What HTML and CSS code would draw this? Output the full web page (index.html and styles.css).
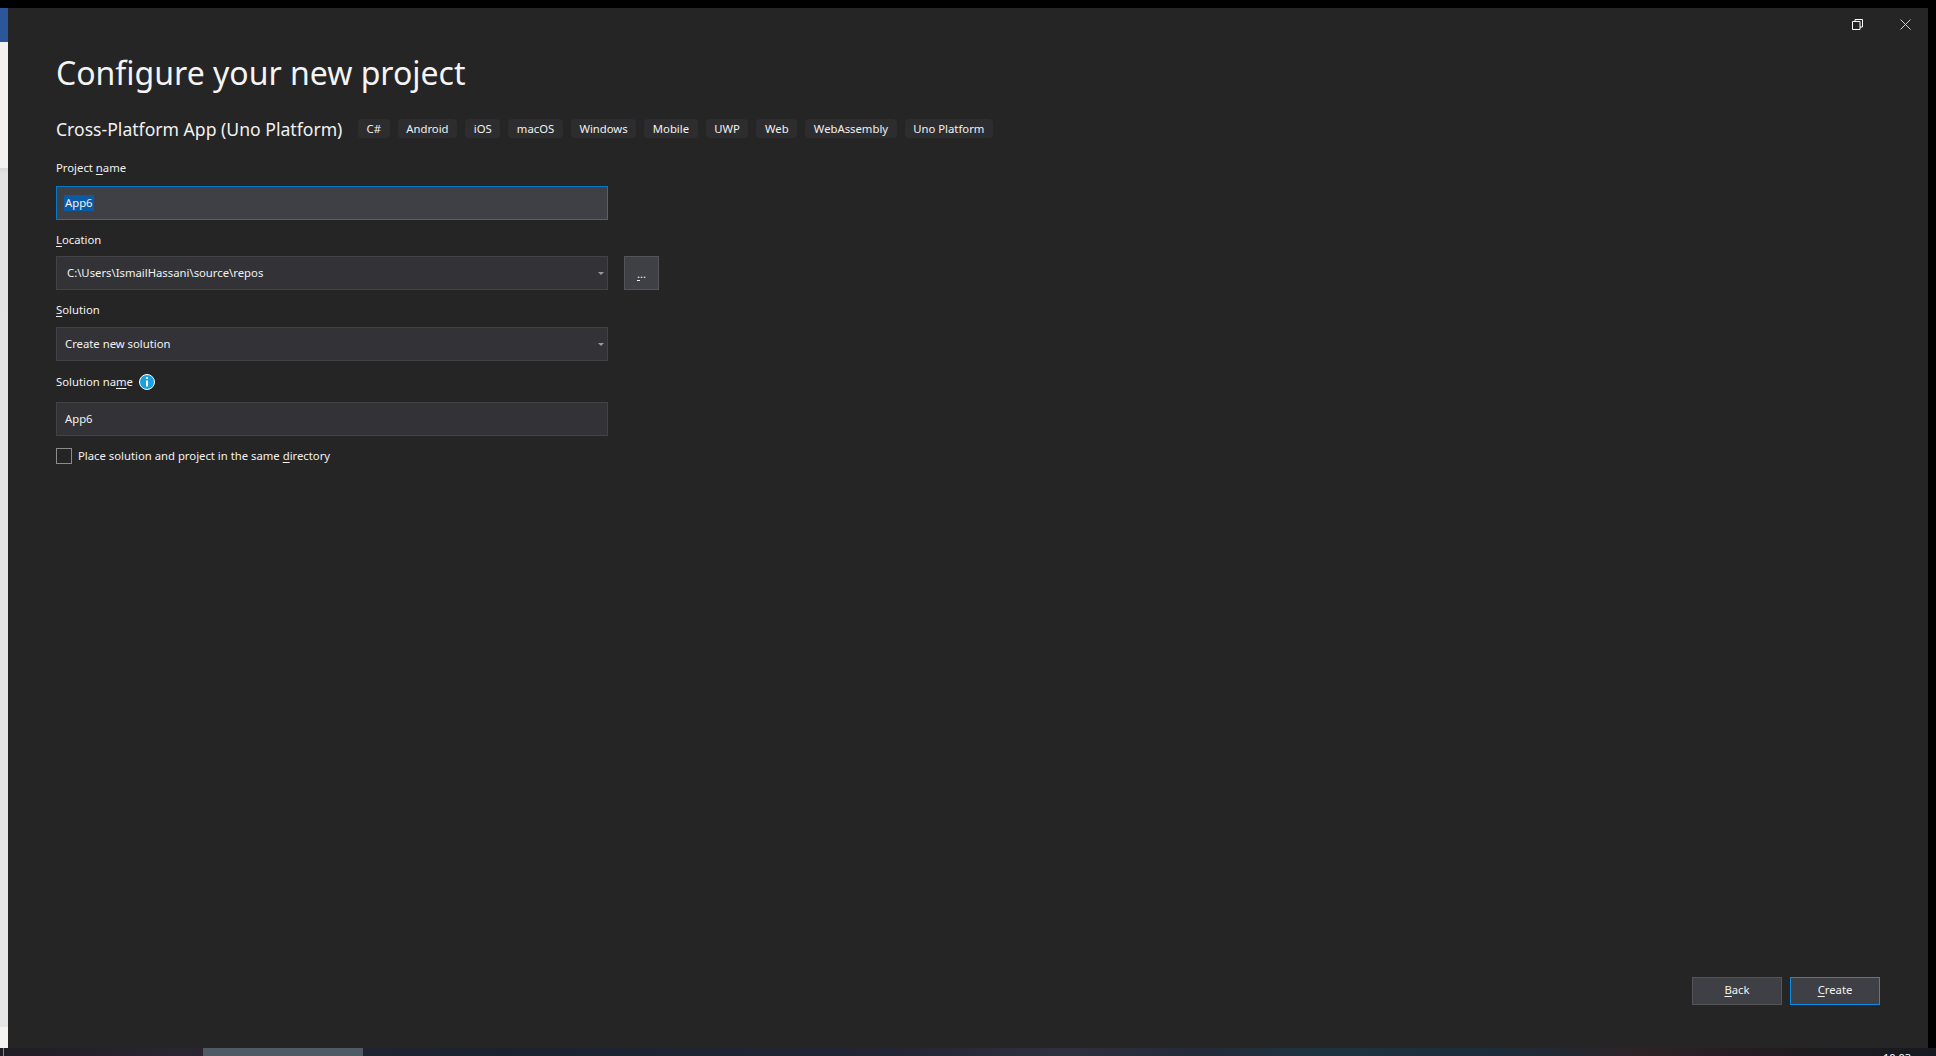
FILE: index.html
```html
<!DOCTYPE html>
<html lang="en">
<head>
<meta charset="utf-8">
<title>Configure your new project</title>
<link rel="stylesheet" href="styles.css">
</head>
<body>
<div class="top-edge"></div>
<div class="middle">
  <div class="left-strip">
    <div class="strip-blue"></div>
    <div class="strip-light"></div>
    <div class="strip-grey"></div>
    <div class="strip-end"></div>
  </div>
  <main class="dialog">
    <div class="window-controls">
      <svg class="win-icon" width="11" height="11" viewBox="0 0 11 11"><path d="M.5 2.500h7.500v8H.5zM3 2.500V.5h7.500v7.500H8" fill="none" stroke="#fff" stroke-width="1"/></svg>
      <svg class="win-icon" width="11" height="11" viewBox="0 0 11 11"><path d="M.5.5l10 10M10.500.5l-10 10" fill="none" stroke="#cfcfcf" stroke-width="1"/></svg>
    </div>
    <div class="content">
      <h1 class="title">Configure your new project</h1>
      <div class="template-row">
        <span class="template-name">Cross-Platform App (Uno Platform)</span>
        <span class="tags">
          <span class="tag">C#</span><span class="tag">Android</span><span class="tag">iOS</span><span class="tag">macOS</span><span class="tag">Windows</span><span class="tag">Mobile</span><span class="tag">UWP</span><span class="tag">Web</span><span class="tag">WebAssembly</span><span class="tag">Uno Platform</span>
        </span>
      </div>
      <div class="field field-project">
        <label class="label">Project <u>n</u>ame</label>
        <div class="input input-focus"><span class="selected">App6</span></div>
      </div>
      <div class="field">
        <label class="label"><u>L</u>ocation</label>
        <div class="input-row">
          <div class="input input-path">C:\Users\IsmailHassani\source\repos<span class="caret"></span></div>
          <div class="browse"><span class="browse-text"><u>.</u>..</span></div>
        </div>
      </div>
      <div class="field field-solution">
        <label class="label"><u>S</u>olution</label>
        <div class="input">Create new solution<span class="caret"></span></div>
      </div>
      <div class="field field-name">
        <div class="label-row">
          <label class="label">Solution na<u>m</u>e</label>
          <svg class="info" width="16" height="16" viewBox="0 0 16 16"><circle cx="8" cy="8" r="7.500" fill="#1ba1e2" stroke="#fff" stroke-width="1"/><rect x="7" y="3" width="2" height="2" fill="#fff"/><rect x="7" y="6.500" width="2" height="6" fill="#fff"/></svg>
        </div>
        <div class="input">App6</div>
      </div>
      <div class="check-row">
        <span class="checkbox"></span>
        <label class="label">Place solution and project in the same <u>d</u>irectory</label>
      </div>
    </div>
    <div class="actions">
      <div class="button"><span><u>B</u>ack</span></div>
      <div class="button button-primary"><span><u>C</u>reate</span></div>
    </div>
  </main>
  <div class="right-strip"></div>
</div>
<footer class="taskbar">
  <div class="task-tick"></div>
  <div class="task-thumb"></div>
  <span class="clock">10:03</span>
</footer>
</body>
</html>
```

FILE: styles.css
```css
* { box-sizing: border-box; }
html, body { margin: 0; height: 100%; }
body {
  width: 1936px;
  height: 1056px;
  overflow: hidden;
  display: flex;
  flex-direction: column;
  background: #000;
  font-family: "Noto Sans", "Open Sans", sans-serif;
  font-size: 11.3px;
  color: #f1f1f1;
}
u { text-underline-offset: 2px; text-decoration-thickness: 1px; }

.top-edge { height: 8px; flex: none; background: #000; }
.middle { flex: 1; display: flex; min-height: 0; }
.left-strip { width: 8px; flex: none; display: flex; flex-direction: column; }
.strip-blue { height: 34px; background: #2b579a; }
.strip-light { height: 126px; background: #f3f2f0; }
.strip-grey { flex: 1; background: linear-gradient(#d8d8d8, #e4e4e4 6px, #e6e6e6); }
.strip-end { height: 21px; background: #f5f4f2; }
.right-strip { width: 8px; flex: none; background: #000; }

.dialog {
  flex: 1;
  display: flex;
  flex-direction: column;
  background: #252526;
  position: relative;
}
.window-controls {
  position: absolute;
  top: 11px;
  right: 17px;
  display: flex;
  gap: 37px;
}
.win-icon { display: block; }

.content { flex: 1; padding: 43px 0 0 48px; }
.title {
  margin: 0;
  font-size: 32px;
  font-weight: 400;
  line-height: 44px;
  color: #f4f4f4;
}
.template-row {
  display: flex;
  align-items: center;
  height: 25px;
  margin-top: 21px;
}
.template-name { font-size: 17.6px; width: 302px; flex: none; white-space: nowrap; }
.tags { display: flex; gap: 8px; }
.tag {
  height: 19px;
  padding: 0 8.6px 1px;
  display: flex;
  align-items: center;
  border-radius: 4px;
  background: #2d2d30;
  white-space: nowrap;
}

.field { margin-top: 12px; }
.field-project { margin-top: 19px; }
.field-name { margin-top: 13px; }
.label { display: block; line-height: 16px; white-space: nowrap; }
.label-row { display: flex; align-items: center; gap: 6px; }
.field > .label, .label-row { margin-bottom: 8px; }
.field-project > .label { margin-bottom: 10px; }
.field-solution > .label { margin-bottom: 9px; }
.field-name > .label-row { margin-bottom: 12px; }

.input {
  position: relative;
  width: 552px;
  height: 34px;
  padding: 0 8px 2px;
  display: flex;
  align-items: center;
  background: #333337;
  border: 1px solid #434346;
  white-space: nowrap;
}
.input-focus { background: #3f3f46; border-color: #007acc; padding: 0 8px 0 7px; }
.selected { background: #0a5ba6; color: #f1f1f1; padding: 0 1px; line-height: 16px; }
.input-path { padding-left: 10px; }
.input-row { display: flex; gap: 16px; }
.caret {
  position: absolute;
  right: 3px;
  top: 15px;
  width: 0;
  height: 0;
  border: 3px solid transparent;
  border-top-color: #999;
  border-bottom: 0;
}
.browse {
  width: 35px;
  height: 34px;
  background: #3f3f46;
  border: 1px solid #555558;
  display: flex;
  justify-content: center;
  align-items: center;
}
.browse-text { position: relative; }

.check-row { display: flex; align-items: center; gap: 6px; margin-top: 12px; }
.checkbox { width: 16px; height: 16px; border: 1px solid #8a8a8a; flex: none; }

.actions {
  display: flex;
  justify-content: flex-end;
  gap: 8px;
  padding: 0 48px 43px 0;
}
.button {
  width: 90px;
  height: 28px;
  padding-bottom: 4px;
  background: #3f3f46;
  border: 1px solid #555558;
  display: flex;
  align-items: center;
  justify-content: center;
}
.button-primary { border-color: #0e8ee9; }

.taskbar {
  position: relative;
  flex: none;
  height: 8px;
  overflow: hidden;
  background: linear-gradient(90deg, #201d25 0, #2a2530 180px, #1a2230 500px, #232535 900px, #302f3d 1060px, #232a3a 1200px, #1e3340 1320px, #1c2c3a 1500px, #2e2226 1640px, #241c22 1760px, #161a20 1928px);
}
.task-tick { position: absolute; left: 3px; top: 0; width: 1px; height: 8px; background: #8a8a8a; }
.task-thumb { position: absolute; left: 203px; top: 0; width: 160px; height: 8px; background: #4f5b64; }
.clock { position: absolute; left: 1883px; top: 3px; font-size: 11px; line-height: 14px; color: #fff; }
```
